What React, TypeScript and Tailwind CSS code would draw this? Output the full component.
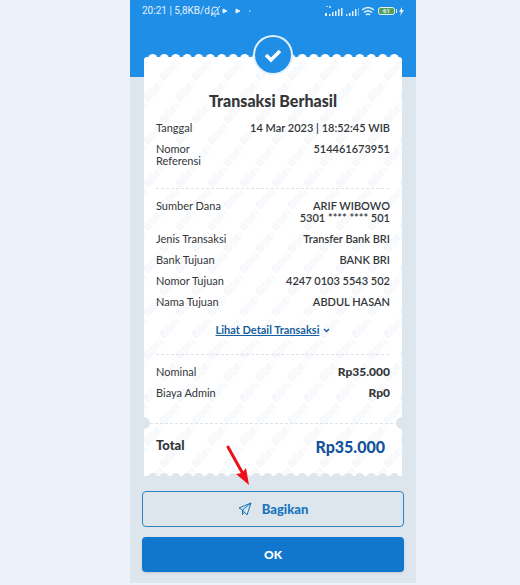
import React from "react";

type RowProps = {
  label: React.ReactNode;
  children: React.ReactNode;
  strong?: boolean;
};

function Row({ label, children, strong }: RowProps) {
  return (
    <div className="flex justify-between">
      <dt>{label}</dt>
      <dd className={strong ? "text-right text-[12px] font-black" : "text-right font-semibold"}>{children}</dd>
    </div>
  );
}

function Divider() {
  return (
    <svg className="block h-px w-full" aria-hidden="true">
      <line x1="0" y1="0.5" x2="100%" y2="0.5" stroke="#dce3eb" strokeDasharray="3 2" />
    </svg>
  );
}

function Watermark() {
  return (
    <svg className="absolute inset-0 h-full w-full" aria-hidden="true">
      <defs>
        <pattern id="mark" width="32" height="43" patternUnits="userSpaceOnUse">
          {[
            [23, 19],
            [-9, 19],
            [7, 40],
            [7, -3],
          ].map(([x, y]) => (
            <g key={`${x}-${y}`} transform={`translate(${x} ${y}) rotate(-45) scale(0.8)`} fill="none" stroke="#f5f7fa" strokeWidth="2">
              <rect x="-6" y="-7" width="8" height="8" rx="2" />
              <path d="M-4 -1v-4h2q2 1 0 2q2 1 1 3" />
              <path d="M5 1v-8h3q3 2 0 4q4 2 0 4zM13 1v-8h3q3 2 0 4h-3l5 4M21 1v-8" />
            </g>
          ))}
        </pattern>
      </defs>
      <rect width="100%" height="100%" fill="url(#mark)" />
    </svg>
  );
}

function Scallops({ id, color }: { id: string; color: string }) {
  return (
    <svg className="block h-[3px] w-full" aria-hidden="true">
      <defs>
        <pattern id={id} x="3" width="11.5" height="8" patternUnits="userSpaceOnUse">
          <ellipse cx="5.75" cy="4" rx="4.5" ry="4" fill={color} />
        </pattern>
      </defs>
      <rect x="3" width="98%" height="3" fill={`url(#${id})`} />
    </svg>
  );
}

function StatusBar() {
  return (
    <div className="flex items-center justify-between px-3 pt-1 text-[#e3f1fc]">
      <div className="flex items-center">
        <span className="font-['Roboto','Liberation_Sans',sans-serif] text-[10px] leading-[14px]">20:21 | 5,8KB/d</span>
        <svg width="48" height="12" viewBox="0 0 48 12" fill="none" stroke="currentColor" aria-hidden="true">
          <path d="M-5 9h9M-4 9V5q0-3 3-3t3 3v4M-2 11h2M4 1L-5 11" transform="translate(-3 0) translate(9 0)" />
          <path d="M13 4l4 2-4 2zM26 4l4 2-4 2z" fill="currentColor" />
          <path d="M39 6h1.500" />
        </svg>
      </div>
      <svg width="80" height="14" viewBox="0 0 80 14" fill="currentColor" aria-hidden="true">
        <path d="M1 9h2v3H1zM5 10h1.500v2H5zM8 8h1.500v4H8zM11 7h1.500v5H11zM14 5h1.500v7H14zM17 4h1.500v8H17z" />
        <path d="M2 2h2v1H2zM5 2h2v2H5z" opacity=".7" />
        <path d="M22 10h1.500v2H22zM25 9h1.500v3H25zM28 7h1.500v5H28zM31 5h1.500v7H31z" />
        <path d="M34 4h1v8h-1z" opacity=".5" />
        <g fill="none" stroke="currentColor" strokeWidth="1.500">
          <path d="M38 6q6-5 12 0M40 8.500q4-3.500 8 0" />
          <path d="M42 11q2-2 4 0" />
        </g>
        <rect x="54.500" y="3.500" width="16" height="7" rx="2" fill="#55a05b" stroke="currentColor" />
        <path d="M72 5h1v4h-1zM78 3l-3 5h2l-1 4 4-6h-2z" />
        <text x="62.500" y="9" textAnchor="middle" fontFamily="Roboto, sans-serif" fontSize="6" fontWeight="700">61</text>
      </svg>
    </div>
  );
}

export default function App() {
  return (
    <div className="min-h-screen bg-[#edf2fa] pr-[20%] pl-[25%] font-['Lato','Liberation_Sans',sans-serif] text-[11px] leading-[12px] text-[#343639]">
      <div className="bg-[#dee6ed] pb-[11px]">
        <header className="h-[77px] bg-[#1f8ee6]">
          <StatusBar />
        </header>

        <main className="relative -mt-[23px] px-3">
          <div className="px-[2px]">
            <Scallops id="scallop-top" color="#ffffff" />
            <section className="relative rounded-t-[3px] bg-white">
              <Watermark />
              <svg
                className="absolute -top-[22px] left-1/2 -translate-x-1/2"
                width="40"
                height="40"
                viewBox="0 0 40 40"
                aria-hidden="true"
              >
                <circle cx="20" cy="20" r="20" fill="#e3f1fd" />
                <circle cx="20" cy="20" r="18" fill="#1f8ee6" />
                <path d="M13 20l5 5 9-9" fill="none" stroke="#fff" strokeWidth="3.500" />
              </svg>

              <div className="relative px-3 pt-[34px]">
                <h1 className="text-center text-[16px] leading-[20px] font-black">Transaksi Berhasil</h1>
                <dl className="mt-[11px] flex flex-col gap-[9px]">
                  <Row label="Tanggal">14 Mar 2023 | 18:52:45 WIB</Row>
                  <Row label={<>Nomor<br />Referensi</>}>514461673951</Row>
                </dl>
                <div className="mt-[21px] mb-[11px]">
                  <Divider />
                </div>
                <dl className="flex flex-col gap-[9px]">
                  <Row label="Sumber Dana">
                    <span className="block">ARIF WIBOWO</span>
                    <span className="block">5301 **** **** 501</span>
                  </Row>
                  <Row label="Jenis Transaksi">Transfer Bank BRI</Row>
                  <Row label="Bank Tujuan">BANK BRI</Row>
                  <Row label="Nomor Tujuan">4247 0103 5543 502</Row>
                  <Row label="Nama Tujuan">ABDUL HASAN</Row>
                </dl>
                <div className="mt-4 flex justify-center">
                  <a href="#detail" className="flex items-center gap-1 font-bold text-[#175f9f]">
                    <span className="underline">Lihat Detail Transaksi</span>
                    <svg width="7" height="5" viewBox="0 0 7 5" fill="none" stroke="currentColor" strokeWidth="1.500" aria-hidden="true">
                      <path d="M1 1l2.500 2.500L6 1" />
                    </svg>
                  </a>
                </div>
                <div className="mt-[18px] mb-[11px]">
                  <Divider />
                </div>
                <dl className="flex flex-col gap-[9px]">
                  <Row label="Nominal" strong>Rp35.000</Row>
                  <Row label="Biaya Admin" strong>Rp0</Row>
                </dl>
              </div>

              <div className="relative mt-[18px] flex items-center overflow-hidden">
                <span className="-ml-[6px] size-3 shrink-0 rounded-full bg-[#dee6ed]" />
                <Divider />
                <span className="-mr-[6px] size-3 shrink-0 rounded-full bg-[#dee6ed]" />
              </div>

              <dl className="relative flex items-center justify-between pt-2 pr-[17px] pb-4 pl-3 font-black">
                <dt className="pb-1 text-[13px] leading-[16px]">Total</dt>
                <dd className="text-[16px] leading-[20px] text-[#14549a]">Rp35.000</dd>
              </dl>
              <div className="relative">
                <Scallops id="scallop-bottom" color="#dee6ed" />
              </div>
            </section>
          </div>

          <svg className="absolute top-[390px] left-[95px]" width="26" height="42" viewBox="0 0 26 42" aria-hidden="true">
            <path d="M3 3l15 27" stroke="#ee1018" strokeWidth="3" strokeLinecap="round" />
            <path d="M24 41L11 30l6-1 4-5z" fill="#ee1018" />
          </svg>

          <div className="mt-[15px] flex flex-col gap-[10px]">
            <button type="button" className="flex h-9 items-center justify-center gap-[10px] rounded-[4px] border border-[#3583bd] text-[13px] font-black text-[#1974bb]">
              <svg width="14" height="14" viewBox="0 0 14 14" fill="none" stroke="currentColor" strokeLinejoin="round" aria-hidden="true">
                <path d="M13 1L1 6l3.500 2L9 13zM13 1L4.500 8v4.500L6.500 10" />
              </svg>
              Bagikan
            </button>
            <button type="button" className="h-[35px] rounded-[4px] bg-[#1077cc] text-[12px] font-black text-white shadow-sm">
              OK
            </button>
          </div>
        </main>
      </div>
    </div>
  );
}
